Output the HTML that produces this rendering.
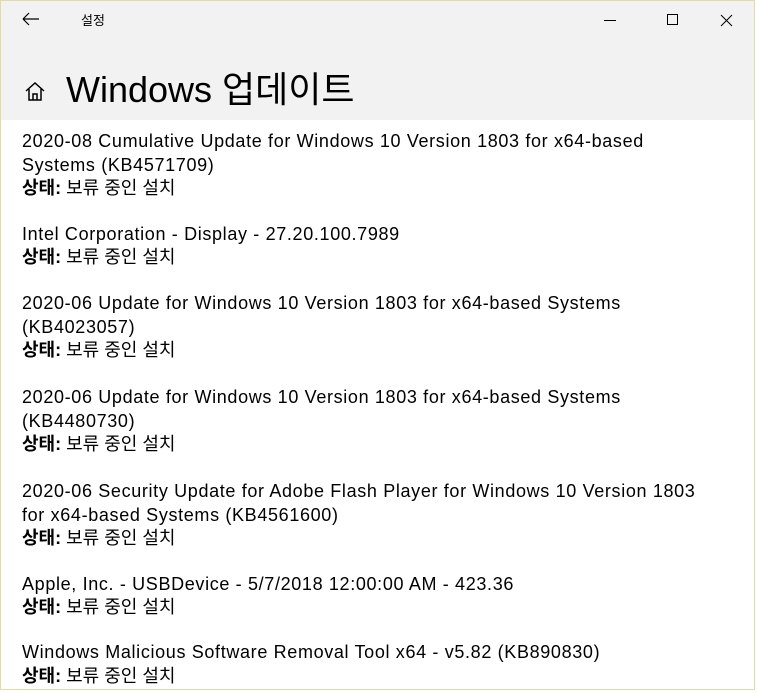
<!DOCTYPE html>
<html><head><meta charset="utf-8"><style>
body{margin:0;width:757px;height:693px;background:#fff;overflow:hidden;font-family:"Liberation Sans","Noto Sans CJK KR",sans-serif;color:#000;position:relative}
.win{position:absolute;left:0;top:0;width:755px;height:690px;border:1px solid #e6d9a8;background:#fff;box-sizing:border-box}
.hdr{position:absolute;left:1px;top:1px;width:753px;height:119px;background:#f2f2f2}
.t{position:absolute;left:22px;font-size:18px;white-space:nowrap;line-height:24px;letter-spacing:0.65px}
.s{letter-spacing:0}
.s b{font-weight:bold}
</style></head><body>
<div class="win"></div>
<div class="hdr"></div>
<svg style="position:absolute;left:22px;top:12px" width="18" height="14" viewBox="0 0 18 14"><path d="M1 7H17M1 7L7 1M1 7L7 13" stroke="#000" stroke-width="1.2" fill="none"/></svg>
<div style="position:absolute;left:81px;top:10px;font-size:13px">설정</div>
<svg style="position:absolute;left:604px;top:13px" width="150" height="16"><path d="M0 7.5H12" stroke="#000"/><path d="M63.5 1.5h10v10h-10z" stroke="#000" fill="none"/><path d="M117 2L128 13M128 2L117 13" stroke="#000" fill="none"/></svg>
<svg style="position:absolute;left:24px;top:80px" width="22" height="22" viewBox="0 0 22 22"><path d="M2 11L11 3L20 11M5 9V20H17V9M9 20V14H13V20" stroke="#000" stroke-width="1.5" fill="none"/></svg>
<div style="position:absolute;left:66px;top:66px;font-size:36px;line-height:48px">Windows 업데이트</div>
<div class="t" style="top:129px">2020-08 Cumulative Update for Windows 10 Version 1803 for x64-based</div>
<div class="t" style="top:153px">Systems (KB4571709)</div>
<div class="t s" style="top:176px"><b>상태:</b> 보류 중인 설치</div>
<div class="t" style="top:222px">Intel Corporation - Display - 27.20.100.7989</div>
<div class="t s" style="top:245px"><b>상태:</b> 보류 중인 설치</div>
<div class="t" style="top:291px">2020-06 Update for Windows 10 Version 1803 for x64-based Systems</div>
<div class="t" style="top:315px">(KB4023057)</div>
<div class="t s" style="top:338px"><b>상태:</b> 보류 중인 설치</div>
<div class="t" style="top:385px">2020-06 Update for Windows 10 Version 1803 for x64-based Systems</div>
<div class="t" style="top:409px">(KB4480730)</div>
<div class="t s" style="top:432px"><b>상태:</b> 보류 중인 설치</div>
<div class="t" style="top:479px">2020-06 Security Update for Adobe Flash Player for Windows 10 Version 1803</div>
<div class="t" style="top:503px">for x64-based Systems (KB4561600)</div>
<div class="t s" style="top:526px"><b>상태:</b> 보류 중인 설치</div>
<div class="t" style="top:572px">Apple, Inc. - USBDevice - 5/7/2018 12:00:00 AM - 423.36</div>
<div class="t s" style="top:595px"><b>상태:</b> 보류 중인 설치</div>
<div class="t" style="top:640px">Windows Malicious Software Removal Tool x64 - v5.82 (KB890830)</div>
<div class="t s" style="top:664px"><b>상태:</b> 보류 중인 설치</div>
</body></html>
